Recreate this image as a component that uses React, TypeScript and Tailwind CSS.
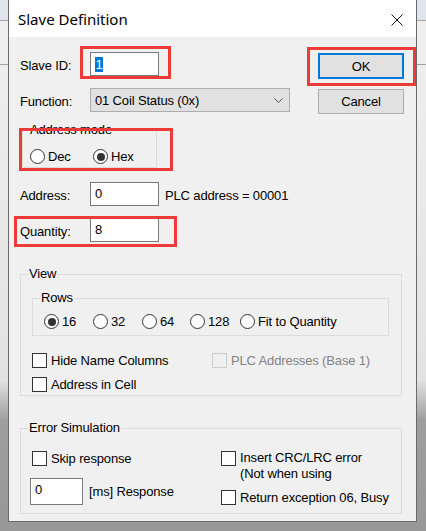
import React from "react";

function Radio({ checked }: { checked?: boolean }) {
  return (
    <span className="w-[15px] h-[15px] shrink-0 rounded-full border border-[#333333] bg-white flex items-center justify-center">
      {checked && <span className="w-[8px] h-[8px] rounded-full bg-[#333333]" />}
    </span>
  );
}

function Check({ disabled }: { disabled?: boolean }) {
  return (
    <span
      className={
        disabled
          ? "w-[15px] h-[15px] shrink-0 border border-[#cccccc] bg-[#f0f0f0]"
          : "w-[15px] h-[15px] shrink-0 border border-[#333333] bg-white"
      }
    />
  );
}

function RedBox({ className }: { className: string }) {
  return <div className={"absolute border-[3px] border-[#ef3a3a] pointer-events-none " + className} />;
}

export default function App() {
  return (
    <div className="w-[426px] h-[531px] overflow-hidden flex flex-col font-['Liberation_Sans',Arial,sans-serif] text-[13px] tracking-[-0.15px] text-black bg-[linear-gradient(to_bottom,#dfe5ec_0px,#dfe5ec_20px,#a6a6a6_20px,#a6a6a6_21px,#efefef_21px,#efefef_64px,#a0a0a0_64px,#a0a0a0_65px,#eeeeee_65px,#e2e2e2_380px,#9e9e9e_420px,#989898_100%)]">
      <div className="flex">
        <div className="w-[8px] shrink-0" />
        <div className="w-[409px] h-[522px] shrink-0 flex flex-col border-x border-b border-[#6a6a6a] bg-[#f0f0f0]">
          {/* Title bar */}
          <div className="h-[37px] shrink-0 bg-white flex items-center justify-between pl-[9px] pr-[13px]">
            <span className="font-['Noto_Sans',sans-serif] text-[15px] tracking-normal leading-none pt-[2px]">Slave Definition</span>
            <svg width="12" height="12" viewBox="0 0 12 12" className="mt-[2px]">
              <path d="M0.5 0.5 L11.5 11.5 M11.5 0.5 L0.5 11.5" stroke="#111" strokeWidth="1" />
            </svg>
          </div>

          {/* Body */}
          <div className="flex-1 flex flex-col">
            <div className="flex">
              {/* Left column */}
              <div className="w-[309px] shrink-0 pt-[15px] flex flex-col">
                <div className="h-[24px] flex items-center pl-[11px]">
                  <span className="w-[70px] pt-[3px]">Slave ID:</span>
                  <div className="relative w-[69px] h-[24px] border border-[#7a7a7a] bg-white flex items-center pl-[4px]">
                    <span className="bg-[#0078d7] text-white leading-[15px] px-[0.5px]">1</span>
                    <RedBox className="-left-[11px] -top-[7px] w-[91px] h-[33px]" />
                  </div>
                </div>

                <div className="h-[24px] mt-[12px] flex items-center pl-[11px]">
                  <span className="w-[70px] pt-[3px]">Function:</span>
                  <div className="w-[200px] h-[24px] border border-[#adadad] bg-[#e1e1e1] flex items-center justify-between pl-[4px] pr-[6px]">
                    <span className="pt-[1px]">01 Coil Status (0x)</span>
                    <svg width="9" height="5" viewBox="0 0 9 5">
                      <path d="M0.5 0.5 L4.5 4.5 L8.5 0.5" fill="none" stroke="#555" strokeWidth="1" />
                    </svg>
                  </div>
                </div>

                <div className="relative mt-[18px] ml-[13px] w-[135px] h-[38px] border border-[#dcdcdc]">
                  <span className="absolute -top-[9px] left-[6px] px-[1px] bg-[#f0f0f0] leading-[16px]">Address mode</span>
                  <div className="flex items-center pt-[16px] pl-[7px]">
                    <div className="w-[63px] flex items-center gap-[3px]">
                      <Radio />
                      <span>Dec</span>
                    </div>
                    <div className="flex items-center gap-[3px]">
                      <Radio checked />
                      <span>Hex</span>
                    </div>
                  </div>
                  <RedBox className="-left-[4px] -top-[3px] w-[154px] h-[43px]" />
                </div>

                <div className="h-[24px] mt-[14px] flex items-center pl-[11px]">
                  <span className="w-[70px] pt-[3px]">Address:</span>
                  <div className="w-[69px] h-[24px] border border-[#7a7a7a] bg-white flex items-center pl-[4px]">0</div>
                  <span className="ml-[6px] pt-[3px]">PLC address = 00001</span>
                </div>

                <div className="relative h-[24px] mt-[12px] flex items-center pl-[11px]">
                  <span className="w-[70px] pt-[3px]">Quantity:</span>
                  <div className="w-[69px] h-[24px] border border-[#7a7a7a] bg-white flex items-center pl-[4px]">8</div>
                  <RedBox className="left-[5px] -top-[2px] w-[163px] h-[31px]" />
                </div>
              </div>

              {/* Right column: buttons */}
              <div className="pt-[16px] flex flex-col">
                <div className="relative w-[86px] h-[26px] border-2 border-[#0078d7] bg-[#e1e1e1] flex items-center justify-center">
                  <span className="pt-[1px]">OK</span>
                  <RedBox className="-left-[13px] -top-[8px] w-[109px] h-[39px]" />
                </div>
                <div className="mt-[10px] w-[86px] h-[25px] border border-[#adadad] bg-[#e1e1e1] flex items-center justify-center">
                  <span className="pt-[1px]">Cancel</span>
                </div>
              </div>
            </div>

            {/* View group */}
            <div className="relative mt-[32px] ml-[11px] w-[382px] h-[122px] border border-[#dcdcdc]">
              <span className="absolute -top-[9px] left-[7px] px-[1px] bg-[#f0f0f0] leading-[16px]">View</span>
              <div className="relative mt-[23px] ml-[11px] w-[357px] h-[38px] border border-[#dcdcdc]">
                <span className="absolute -top-[9px] left-[7px] px-[1px] bg-[#f0f0f0] leading-[16px]">Rows</span>
                <div className="flex items-center pt-[13px] pl-[11px]">
                  <div className="w-[49px] flex items-center gap-[3px]">
                    <Radio checked />
                    <span>16</span>
                  </div>
                  <div className="w-[49px] flex items-center gap-[3px]">
                    <Radio />
                    <span>32</span>
                  </div>
                  <div className="w-[48px] flex items-center gap-[3px]">
                    <Radio />
                    <span>64</span>
                  </div>
                  <div className="w-[50px] flex items-center gap-[3px]">
                    <Radio />
                    <span>128</span>
                  </div>
                  <div className="flex items-center gap-[3px]">
                    <Radio />
                    <span>Fit to Quantity</span>
                  </div>
                </div>
              </div>
              <div className="mt-[17px] ml-[11px] flex items-center h-[15px]">
                <div className="w-[180px] flex items-center gap-[4px]">
                  <Check />
                  <span>Hide Name Columns</span>
                </div>
                <div className="flex items-center gap-[4px]">
                  <Check disabled />
                  <span className="text-[#838383]">PLC Addresses (Base 1)</span>
                </div>
              </div>
              <div className="mt-[9px] ml-[11px] flex items-center h-[15px] gap-[4px]">
                <Check />
                <span>Address in Cell</span>
              </div>
            </div>

            {/* Error Simulation group */}
            <div className="relative mt-[32px] ml-[11px] w-[382px] h-[86px] border border-[#dcdcdc] flex">
              <span className="absolute -top-[9px] left-[7px] px-[1px] bg-[#f0f0f0] leading-[16px]">Error Simulation</span>
              <div className="w-[200px] shrink-0 pl-[9px] pt-[22px] flex flex-col">
                <div className="pl-[2px] flex items-center h-[15px] gap-[4px]">
                  <Check />
                  <span>Skip response</span>
                </div>
                <div className="mt-[12px] flex items-center">
                  <div className="w-[53px] h-[27px] border border-[#7a7a7a] bg-white pl-[4px] pt-[3px] leading-[16px]">0</div>
                  <span className="ml-[6px] pt-[1px]">[ms] Response</span>
                </div>
              </div>
              <div className="pt-[22px] flex flex-col">
                <div className="h-[32px] flex items-start gap-[4px]">
                  <Check />
                  <div className="leading-[16px] -mt-[1px]">
                    <div>Insert CRC/LRC error</div>
                    <div>(Not when using</div>
                  </div>
                </div>
                <div className="mt-[7px] flex items-center h-[15px] gap-[4px]">
                  <Check />
                  <span>Return exception 06, Busy</span>
                </div>
              </div>
            </div>
          </div>
        </div>
        <div className="flex-1" />
      </div>
    </div>
  );
}
